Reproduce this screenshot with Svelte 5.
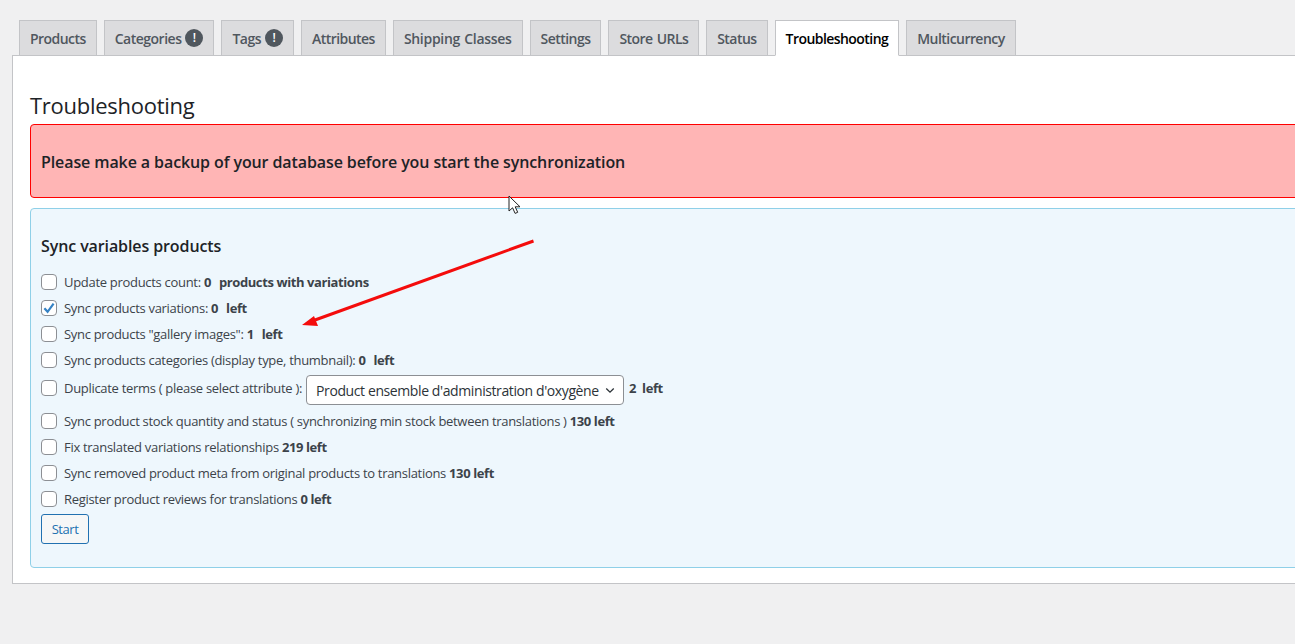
<script lang="ts">
    const tabs = [
        { label: "Products" },
        { label: "Categories", alert: true },
        { label: "Tags", alert: true },
        { label: "Attributes" },
        { label: "Shipping Classes", loose: true },
        { label: "Settings" },
        { label: "Store URLs" },
        { label: "Status" },
        { label: "Troubleshooting", active: true },
        { label: "Multicurrency" },
    ];

    const before = [
        { text: "Update products count:", count: "0", tail: "products with variations", wide: true },
        { text: "Sync products variations:", count: "0", tail: "left", wide: true, checked: true },
        { text: 'Sync products "gallery images":', count: "1", tail: "left", wide: true },
        { text: "Sync products categories (display type, thumbnail):", count: "0", tail: "left", wide: true },
    ];

    const after = [
        { text: "Sync product stock quantity and status ( synchronizing min stock between translations )", count: "130", tail: "left" },
        { text: "Fix translated variations relationships", count: "219", tail: "left" },
        { text: "Sync removed product meta from original products to translations", count: "130", tail: "left" },
        { text: "Register product reviews for translations", count: "0", tail: "left" },
    ];
</script>

{#snippet row(item)}
    <label class="row">
        <span class="check">
            {#if item.checked}
                <svg viewBox="0 0 14 14" width="14" height="14">
                    <path d="M2.4 7.2 5.6 10.8 11.6 2.6" fill="none" stroke="#3582c4" stroke-width="2.2" />
                </svg>
            {/if}
        </span>
        <span>{item.text} <b><span class:spaced={item.wide}>{item.count}</span>{#if item.wide}&nbsp;{/if} {item.tail}</b></span>
    </label>
{/snippet}

<div class="page">
    <nav class="tabs">
        {#each tabs as tab}
            <span class="tab" class:active={tab.active} class:loose={tab.loose} class:has-alert={tab.alert}>
                {tab.label}
                {#if tab.alert}<i class="alert">!</i>{/if}
            </span>
        {/each}
    </nav>

    <main class="panel">
        <h2>Troubleshooting</h2>
        <div class="warning">Please make a backup of your database before you start the synchronization</div>

        <section class="box">
            <h3>Sync variables products</h3>
            {#each before as item}
                {@render row(item)}
            {/each}
            <label class="row select-row">
                <span class="check"></span>
                <span>Duplicate terms ( please select attribute ):</span>
                <span class="select">
                    Product ensemble d'administration d'oxygène
                    <svg viewBox="0 0 12 8" width="10" height="7">
                        <path d="M1.5 1.5 6 6l4.5-4.5" fill="none" stroke="#2c3338" stroke-width="1.6" />
                    </svg>
                </span>
                <b>2&nbsp; left</b>
            </label>
            {#each after as item}
                {@render row(item)}
            {/each}
            <button class="start">Start</button>
        </section>
    </main>

    <svg class="arrow" width="240" height="90" viewBox="0 0 240 90">
        <path d="M233.5 2 15 81" stroke="#f40c0c" stroke-width="3" fill="none" />
        <path d="M2 86 14 77 18 87Z" fill="#f40c0c" />
    </svg>

    <svg class="cursor" width="14" height="20" viewBox="0 0 14 20">
        <path d="M1 1v15l3.6-3.2 2.5 5.6 2.6-1.1-2.5-5.5h4.8Z" fill="#fff" stroke="#222" stroke-width="1" />
    </svg>
</div>

<style>
    :global(body) {
        background: #f0f0f1;
    }
    .page {
        position: relative;
        width: 1295px;
        height: 644px;
        overflow: hidden;
        padding: 20px 0 0 12px;
        box-sizing: border-box;
        font-family: "Open Sans", "Noto Sans", sans-serif;
        font-size: 13px;
        color: #3c434a;
    }
    .tabs {
        display: flex;
        gap: 7px;
        padding-left: 7px;
        height: 36px;
        box-sizing: border-box;
        position: relative;
        z-index: 1;
    }
    .tab {
        display: flex;
        align-items: center;
        gap: 4px;
        height: 36px;
        box-sizing: border-box;
        padding: 0 10px;
        border: 1px solid #c3c4c7;
        background: #dcdcde;
        color: #50575e;
        font-size: 14px;
        font-weight: 600;
        letter-spacing: -0.55px;
        word-spacing: 1px;
    }
    .tab.loose {
        letter-spacing: -0.3px;
    }
    .tab.has-alert {
        letter-spacing: -0.5px;
    }
    .tab.active {
        background: #fff;
        color: #000;
        border-bottom-color: #fff;
    }
    .alert {
        display: block;
        width: 18px;
        height: 18px;
        border-radius: 50%;
        background: #50575e;
        color: #fff;
        font-style: normal;
        font-size: 12px;
        line-height: 18px;
        text-align: center;
        letter-spacing: 0;
    }
    .panel {
        width: 1320px;
        height: 529px;
        margin-top: -1px;
        box-sizing: border-box;
        background: #fff;
        border: 1px solid #c3c4c7;
        padding: 0 17px;
    }
    h2 {
        margin: 34px 0 0;
        height: 34px;
        font-size: 22px;
        line-height: 30px;
        font-weight: 400;
        color: #1d2327;
        letter-spacing: -0.27px;
    }
    .warning {
        height: 74px;
        box-sizing: border-box;
        padding: 1px 10px 0;
        display: flex;
        align-items: center;
        background: #ffb5b5;
        border: 1px solid #f00;
        border-radius: 4px;
        font-size: 16px;
        font-weight: 600;
        color: #1d2327;
        letter-spacing: -0.1px;
    }
    .box {
        height: 360px;
        margin-top: 10px;
        box-sizing: border-box;
        background: #eef7fd;
        border: 1px solid #8fd0e8;
        border-radius: 4px;
        padding: 26px 10px 0;
    }
    h3 {
        margin: 0 0 12px;
        font-size: 16px;
        line-height: 22px;
        font-weight: 600;
        color: #1d2327;
        letter-spacing: -0.1px;
    }
    .row {
        display: flex;
        align-items: center;
        gap: 7px;
        height: 26px;
        box-sizing: border-box;
        font-size: 13px;
        letter-spacing: -0.3px;
    }
    .row b {
        font-weight: 700;
        white-space: pre;
        letter-spacing: -0.4px;
    }
    .spaced {
        padding-right: 2px;
    }
    .select-row {
        height: 35px;
        padding-bottom: 5px;
        gap: 4px;
    }
    .select-row b {
        margin-left: 1px;
    }
    .select-row .check {
        margin-right: 3px;
    }
    .check {
        width: 16px;
        height: 16px;
        flex: none;
        box-sizing: border-box;
        border: 1px solid #8c8f94;
        border-radius: 4px;
        background: #fff;
        display: block;
    }
    .check svg {
        display: block;
    }
    .select {
        width: 318px;
        height: 30px;
        box-sizing: border-box;
        align-self: flex-start;
        margin-top: 2px;
        display: flex;
        align-items: center;
        justify-content: space-between;
        padding: 0 8px 0 9px;
        background: #fff;
        border: 1px solid #8c8f94;
        border-radius: 4px;
        font-size: 14px;
        color: #2c3338;
        letter-spacing: -0.4px;
        white-space: nowrap;
    }
    .start {
        display: block;
        width: 48px;
        height: 30px;
        margin-top: 2px;
        padding: 0;
        background: #f6f7f7;
        border: 1px solid #2271b1;
        border-radius: 3px;
        color: #2271b1;
        font: inherit;
        letter-spacing: -0.45px;
    }
    .arrow {
        position: absolute;
        left: 300px;
        top: 239px;
    }
    .cursor {
        position: absolute;
        left: 508px;
        top: 195px;
    }
</style>
